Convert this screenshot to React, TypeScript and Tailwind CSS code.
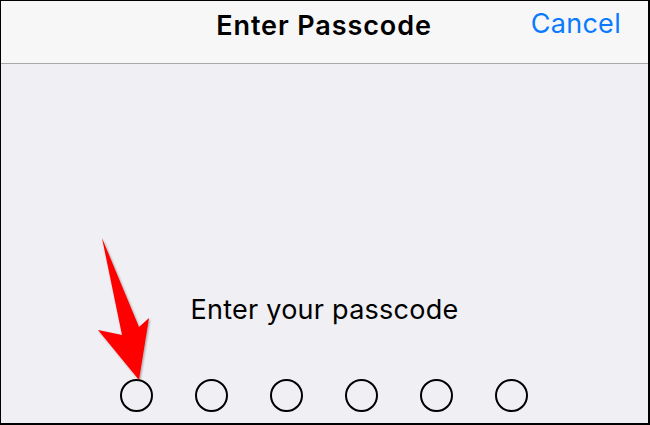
export default function App() {
  const dots = [0, 1, 2, 3, 4, 5]

  return (
    <div className="relative w-[650px] h-[425px] overflow-hidden border-t border-l border-r-2 border-b-2 border-black bg-[#efeff4] font-['Inter',sans-serif]">
      {/* Nav bar */}
      <div className="relative flex justify-center h-[63px] pt-[9px] bg-[#f7f7f8] border-b border-[#a9a9ad]">
        <h1 className="text-[27px] leading-[32px] font-semibold text-black tracking-[0.9px] ml-[-1px]">Enter Passcode</h1>
        <button className="absolute right-[27px] top-[7px] text-[27px] leading-[32px] tracking-[0.3px] text-[#0a7aff]">Cancel</button>
      </div>

      {/* Body */}
      <div className="flex flex-col items-center pt-[230px]">
        <p className="text-[27px] leading-[32px] tracking-[0.25px] text-black">Enter your passcode</p>
        <div className="flex gap-[42px] mt-[53px] ml-[-2px]">
          {dots.map((d) => (
            <span key={d} className="block w-[33px] h-[33px] rounded-full border-2 border-black" />
          ))}
        </div>
      </div>

      {/* Red annotation arrow */}
      <svg className="absolute left-0 top-0 pointer-events-none" width="650" height="425">
        <defs>
          <filter id="sh" x="-20%" y="-20%" width="140%" height="140%">
            <feDropShadow dx="1" dy="1" stdDeviation="1.2" floodColor="#000" floodOpacity="0.35" />
          </filter>
        </defs>
        <polygon
          points="101,237 138,326 148,317 138,379 97,329 121,334"
          fill="#ff0000"
          filter="url(#sh)"
        />
      </svg>
    </div>
  )
}
